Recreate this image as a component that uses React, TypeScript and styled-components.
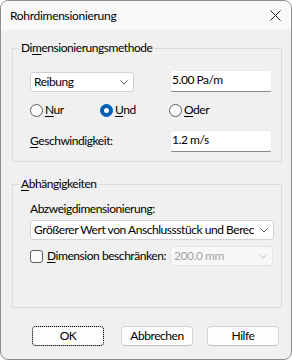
import React from 'react';
import styled, { createGlobalStyle } from 'styled-components';

const Global = createGlobalStyle`
  html, body { margin: 0; padding: 0; background: #ffffff; }
  body {
    font-family: "Segoe UI", Lato, "Noto Sans", sans-serif;
    font-size: 12px;
    letter-spacing: -0.45px;
    color: #000000;
  }
  * { box-sizing: border-box; }
`;

const Window = styled.div`
  width: 292px;
  height: 360px;
  border: 1px solid #8e8e8e;
  border-radius: 8px;
  overflow: hidden;
  background: #f0f0f0;
  display: flex;
  flex-direction: column;
`;

const TitleBar = styled.div`
  height: 29px;
  flex: none;
  background: #f9f9f9;
  display: flex;
  align-items: center;
  justify-content: space-between;
  padding: 0 10px 0 9px;
`;

const Title = styled.span`
  font-size: 12px;
  line-height: 16px;
  letter-spacing: -0.3px;
`;

const Body = styled.div`
  flex: 1;
  display: flex;
  flex-direction: column;
  padding: 10px 9px 0 11px;
`;

const Group = styled.fieldset<{ $pad: string; $mt?: number }>`
  margin: ${(p) => p.$mt ?? 0}px 0 0 0;
  min-width: 0;
  border: 1px solid #dcdcdc;
  padding: ${(p) => p.$pad};
  display: flex;
  flex-direction: column;
`;

const Legend = styled.legend`
  margin-left: -11px;
  padding: 0 2px;
  line-height: 16px;
`;

const FieldRow = styled.div<{ $mt?: number; $align?: string }>`
  display: grid;
  grid-template-columns: 140px 103px;
  align-items: ${(p) => p.$align ?? 'center'};
  margin-top: ${(p) => p.$mt ?? 0}px;
`;

const RadioRow = styled.div<{ $mt?: number }>`
  display: grid;
  grid-template-columns: 70px 69px auto;
  align-items: center;
  height: 20px;
  margin-top: ${(p) => p.$mt ?? 0}px;
`;

const Label = styled.span<{ $mt?: number }>`
  display: block;
  line-height: 16px;
  white-space: nowrap;
  margin-top: ${(p) => p.$mt ?? 0}px;
`;

const Key = styled.span`
  text-decoration: underline;
  text-underline-offset: 2px;
`;

const Combo = styled.div<{ $w: number; $disabled?: boolean; $mt?: number }>`
  width: ${(p) => p.$w}px;
  height: 20px;
  margin-top: ${(p) => p.$mt ?? 0}px;
  background: ${(p) => (p.$disabled ? '#f7f7f7' : '#ffffff')};
  border: 1px solid ${(p) => (p.$disabled ? '#e3e3e3' : '#d2d2d2')};
  border-radius: 3px;
  display: flex;
  align-items: center;
  padding: 0 5px 0 3px;
  color: ${(p) => (p.$disabled ? '#a3a3a3' : '#000000')};
  line-height: 16px;
`;

const ComboText = styled.span`
  flex: 1;
  white-space: nowrap;
  overflow: hidden;
`;

const Chevron = styled.svg<{ $disabled?: boolean }>`
  flex: none;
  margin-left: 6px;
  stroke: ${(p) => (p.$disabled ? '#c2c2c2' : '#5f5f5f')};
`;

const TextBox = styled.div`
  width: 102px;
  height: 22px;
  background: #ffffff;
  border: 1px solid #ececec;
  border-bottom-color: #8a8a8a;
  border-radius: 3px;
  padding: 0 0 0 1px;
  line-height: 17px;
`;

const Option = styled.label`
  display: flex;
  align-items: center;
  gap: 2px;
  line-height: 16px;
  white-space: nowrap;
`;

const RadioCircle = styled.span<{ $checked?: boolean }>`
  width: 13px;
  height: 13px;
  border-radius: 50%;
  flex: none;
  display: flex;
  align-items: center;
  justify-content: center;
  background: ${(p) => (p.$checked ? '#005fb8' : '#fbfbfb')};
  border: 1px solid ${(p) => (p.$checked ? '#005fb8' : '#5e5e5e')};
  &::after {
    content: '';
    display: ${(p) => (p.$checked ? 'block' : 'none')};
    width: 5px;
    height: 5px;
    border-radius: 50%;
    background: #ffffff;
  }
`;

const CheckBox = styled.span`
  width: 13px;
  height: 13px;
  flex: none;
  border: 1px solid #5e5e5e;
  border-radius: 3px;
  background: #fbfbfb;
  margin-right: 2px;
`;

const ButtonRow = styled.div`
  display: flex;
  margin-top: 18px;
  padding-left: 20px;
`;

const Button = styled.div<{ $ml?: number; $focus?: boolean }>`
  width: 72px;
  height: 20px;
  margin-left: ${(p) => p.$ml ?? 0}px;
  background: #fdfdfd;
  border: 1px solid #d3d3d3;
  border-bottom-color: #c2c2c2;
  border-radius: 4px;
  display: flex;
  align-items: center;
  justify-content: center;
  line-height: 16px;
  outline: ${(p) => (p.$focus ? '1px dotted #000000' : 'none')};
  outline-offset: -1px;
`;

const ChevronIcon = ({ disabled }: { disabled?: boolean }) => (
  <Chevron $disabled={disabled} width="8" height="5" viewBox="0 0 8 5" fill="none" strokeWidth="1">
    <polyline points="0.5,0.5 4,4 7.5,0.5" />
  </Chevron>
);

const CloseIcon = () => (
  <svg width="11" height="11" viewBox="0 0 11 11" fill="none" stroke="#1b1b1b" strokeWidth="1">
    <line x1="0.5" y1="0.5" x2="10.5" y2="10.5" />
    <line x1="10.5" y1="0.5" x2="0.5" y2="10.5" />
  </svg>
);

export default function App() {
  return (
    <>
      <Global />
      <Window>
        <TitleBar>
          <Title>Rohrdimensionierung</Title>
          <CloseIcon />
        </TitleBar>
        <Body>
          <Group $pad="14px 0 9px 17px">
            <Legend>
              Di<Key>m</Key>ensionierungsmethode
            </Legend>
            <FieldRow $align="end">
              <Combo $w={104}>
                <ComboText>Reibung</ComboText>
                <ChevronIcon />
              </Combo>
              <TextBox>5.00 Pa/m</TextBox>
            </FieldRow>
            <RadioRow $mt={8}>
              <Option>
                <RadioCircle />
                <span>
                  <Key>N</Key>ur
                </span>
              </Option>
              <Option>
                <RadioCircle $checked />
                <span>
                  <Key>U</Key>nd
                </span>
              </Option>
              <Option>
                <RadioCircle />
                <span>
                  <Key>O</Key>der
                </span>
              </Option>
            </RadioRow>
            <FieldRow $mt={10}>
              <Label>
                <Key>G</Key>eschwindigkeit:
              </Label>
              <TextBox>1.2 m/s</TextBox>
            </FieldRow>
          </Group>
          <Group $pad="9px 7px 41px 17px" $mt={14}>
            <Legend>
              <Key>A</Key>bhängigkeiten
            </Legend>
            <Label>Abzweigdimensionierung:</Label>
            <Combo $w={244} $mt={3}>
              <ComboText>Größerer Wert von Anschlussstück und Berechnung</ComboText>
              <ChevronIcon />
            </Combo>
            <FieldRow $mt={6}>
              <Option>
                <CheckBox />
                <span>
                  <Key>D</Key>imension beschränken:
                </span>
              </Option>
              <Combo $w={103} $disabled>
                <ComboText>200.0 mm</ComboText>
                <ChevronIcon disabled />
              </Combo>
            </FieldRow>
          </Group>
          <ButtonRow>
            <Button $focus>OK</Button>
            <Button $ml={17}>Abbrechen</Button>
            <Button $ml={14}>Hilfe</Button>
          </ButtonRow>
        </Body>
      </Window>
    </>
  );
}
